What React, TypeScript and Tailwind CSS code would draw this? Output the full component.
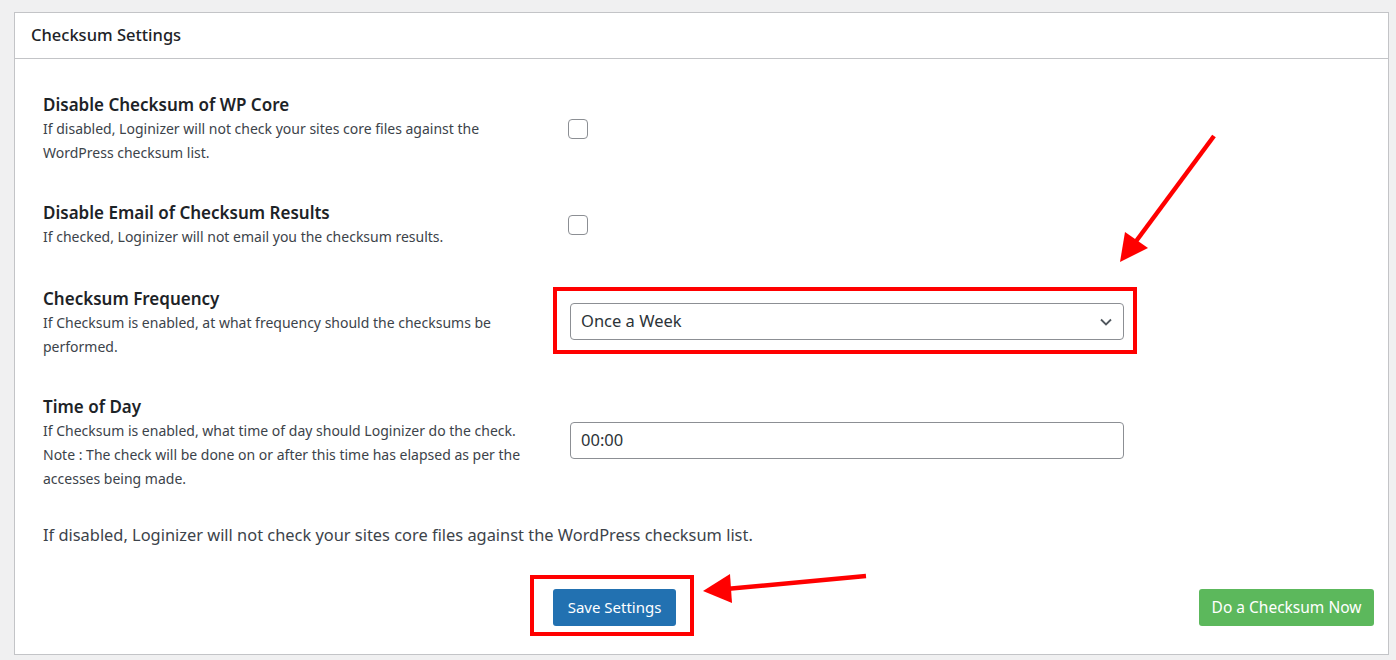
import React from 'react';

const font = { fontFamily: '"Noto Sans", "Open Sans", sans-serif' };

type RowProps = {
  title: string;
  desc: string;
  className?: string;
  children: React.ReactNode;
};

const SettingRow = ({ title, desc, className, children }: RowProps) => (
  <div className={'flex items-center ' + (className ?? '')}>
    <div className="w-[525px] shrink-0">
      <div className="text-[17px] leading-[24px] font-semibold text-[#1d2327]">{title}</div>
      <div className="w-[495px] text-[14px] leading-[24px] text-[#3c434a]">{desc}</div>
    </div>
    <div className="flex-1">{children}</div>
  </div>
);

const Checkbox = () => (
  <span className="block w-[20px] h-[20px] rounded-[4px] border border-[#8c8f94] bg-white" />
);

const Annotations = () => (
  <svg className="absolute inset-0 pointer-events-none" width="1396" height="660" viewBox="0 0 1396 660">
    {/* arrow towards the frequency select */}
    <line x1="1214" y1="136" x2="1134" y2="244" stroke="#ff0000" strokeWidth="4.5" />
    <polygon points="1120,262 1125,232 1148,248" fill="#ff0000" />
    {/* arrow towards the save button */}
    <line x1="866" y1="576" x2="726" y2="589" stroke="#ff0000" strokeWidth="4.5" />
    <polygon points="703,591 730,574 732,603" fill="#ff0000" />
  </svg>
);

const App = () => {
  return (
    <div className="relative w-[1396px] h-[660px] bg-[#f0f0f1] pt-[12px] overflow-hidden" style={font}>
      <div className="ml-[14px] w-[1375px] h-[643px] bg-white border border-[#c3c4c7]">
        {/* Header */}
        <div className="h-[46px] px-[16px] flex items-center border-b border-[#c3c4c7]">
          <h2 className="text-[16.5px] font-medium text-[#1d2327]">Checksum Settings</h2>
        </div>

        {/* Body */}
        <div className="pl-[28px] pt-[34px] flex flex-col gap-[36px]">
          <SettingRow
            title="Disable Checksum of WP Core"
            desc="If disabled, Loginizer will not check your sites core files against the WordPress checksum list."
          >
            <Checkbox />
          </SettingRow>

          <SettingRow
            title="Disable Email of Checksum Results"
            desc="If checked, Loginizer will not email you the checksum results."
          >
            <Checkbox />
          </SettingRow>

          <SettingRow
            className="mt-[2px]"
            title="Checksum Frequency"
            desc="If Checksum is enabled, at what frequency should the checksums be performed."
          >
            <div className="relative ml-[2px] -mt-[3px] w-[554px]">
              <div className="h-[37px] rounded-[4px] border border-[#8c8f94] flex items-center justify-between pl-[10px] pr-[10px] text-[16.5px] text-[#2c3338]">
                <span>Once a Week</span>
                <svg width="14" height="14" viewBox="0 0 14 14" fill="none">
                  <polyline points="2,4.5 7,9.5 12,4.5" stroke="#50575e" strokeWidth="1.8" />
                </svg>
              </div>
              <span className="absolute -top-[16px] -left-[17px] -right-[13px] -bottom-[14px] border-[4px] border-[#ff0000]" />
            </div>
          </SettingRow>

          <SettingRow
            title="Time of Day"
            desc="If Checksum is enabled, what time of day should Loginizer do the check. Note : The check will be done on or after this time has elapsed as per the accesses being made."
          >
            <div className="ml-[2px] -mt-[5px] w-[554px] h-[37px] rounded-[4px] border border-[#8c8f94] flex items-center pl-[10px] text-[16.5px] text-[#2c3338]">
              00:00
            </div>
          </SettingRow>

          <p className="text-[16.4px] leading-[24px] text-[#3c434a] -mt-[4px]">
            If disabled, Loginizer will not check your sites core files against the WordPress checksum list.
          </p>
        </div>

        {/* Buttons */}
        <div className="flex items-center mt-[42px] pl-[538px] pr-[14px]">
          <div className="relative">
            <button className="h-[37px] w-[123px] rounded-[3px] bg-[#2271b1] text-white text-[15px]">
              Save Settings
            </button>
            <span className="absolute -top-[14px] -left-[23px] -right-[18px] -bottom-[10px] border-[4px] border-[#ff0000]" />
          </div>
          <button className="ml-auto h-[37px] w-[175px] rounded-[3px] bg-[#5cb85c] text-white text-[15.5px]">
            Do a Checksum Now
          </button>
        </div>
      </div>
      <Annotations />
    </div>
  );
};

export default App;
